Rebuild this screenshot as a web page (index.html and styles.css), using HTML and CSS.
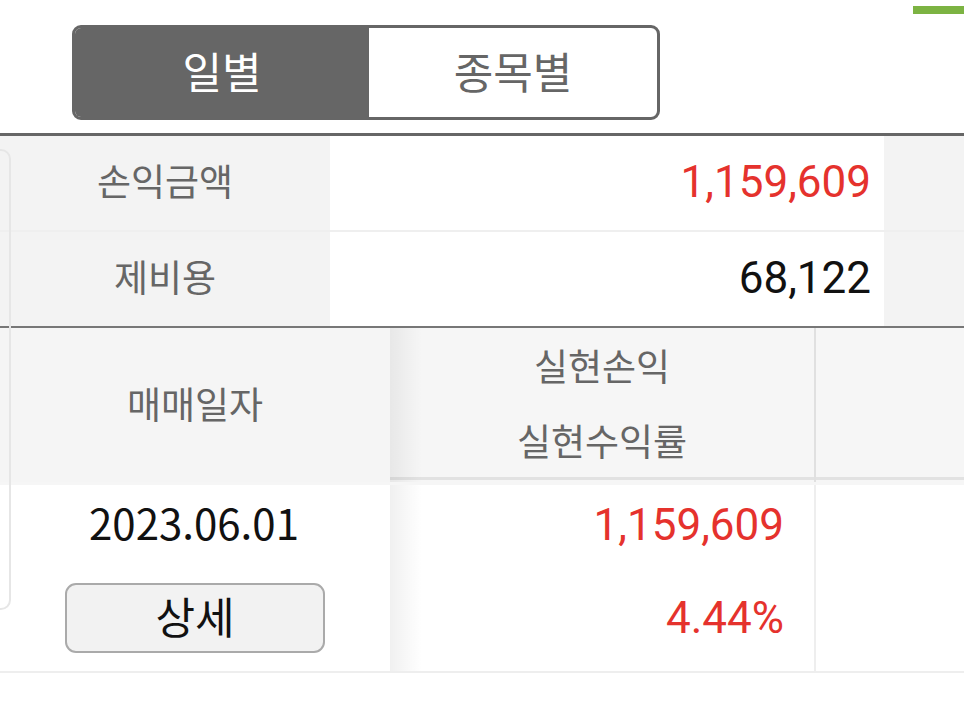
FILE: index.html
```html
<!DOCTYPE html>
<html lang="ko">
<head>
<meta charset="utf-8">
<link rel="stylesheet" href="styles.css">
</head>
<body>
<div class="page">
  <div class="indicator-row"><div class="indicator"></div></div>
  <div class="toggle-wrap">
    <div class="toggle">
      <div class="seg seg-active">일별</div>
      <div class="seg">종목별</div>
    </div>
  </div>
  <div class="rule-dark"></div>
  <div class="content">
    <div class="side-frame"></div>
    <div class="summary">
      <div class="s-label">손익금액</div>
      <div class="s-value red">1,159,609</div>
      <div class="s-pad"></div>
      <div class="s-label s-row2">제비용</div>
      <div class="s-value s-row2 dark">68,122</div>
      <div class="s-pad s-row2"></div>
    </div>
    <div class="rule-mid"></div>
    <div class="table">
      <div class="thead">
        <div class="th th-fixed">매매일자</div>
        <div class="th th-two"><span>실현손익</span><span>실현수익률</span></div>
        <div class="th th-last"></div>
      </div>
      <div class="thead-gap"></div>
      <div class="trow">
        <div class="td td-fixed">
          <div class="date">2023.06.01</div>
          <button class="detail-btn">상세</button>
        </div>
        <div class="td td-two">
          <div class="num-top red">1,159,609</div>
          <div class="num-bot red">4.44%</div>
        </div>
        <div class="td td-last"></div>
      </div>
    </div>
  </div>
</div>
</body>
</html>
```

FILE: styles.css
```css
* { box-sizing: border-box; }
html, body { margin: 0; padding: 0; background: #fff; }
body {
  font-family: "Noto Sans CJK KR", "Noto Sans", sans-serif;
  width: 964px;
  height: 707px;
  overflow: hidden;
}
.page { width: 964px; }

.indicator-row {
  height: 14px;
  padding-top: 6px;
  display: flex;
  justify-content: flex-end;
}
.indicator { width: 51px; height: 8px; background: #7cb342; }

.toggle-wrap { padding: 11px 0 13px 72px; }
.toggle {
  width: 588px;
  height: 95px;
  border: 3px solid #666;
  border-radius: 9px;
  display: flex;
  overflow: hidden;
}
.seg {
  flex: 0 0 288px;
  display: flex;
  align-items: center;
  justify-content: center;
  font-size: 43px;
  color: #666;
  line-height: 1;
  padding-bottom: 4px;
}
.seg-active { flex-basis: 294px; background: #666; color: #fff; }

.rule-dark { height: 3px; background: #666; }

.content { position: relative; }
.side-frame {
  position: absolute;
  left: -20px;
  top: 13px;
  width: 31px;
  height: 461px;
  border: 2px solid #e6e6e6;
  border-radius: 10px;
  pointer-events: none;
  z-index: 3;
}

.summary {
  display: grid;
  grid-template-columns: 330px 554px 80px;
  grid-template-rows: 94px 96px;
}
.s-label {
  background: #f3f3f3;
  color: #666;
  font-size: 37px;
  display: flex;
  align-items: center;
  justify-content: center;
  padding-bottom: 6px;
}
.s-value {
  font-family: Roboto, "Noto Sans", sans-serif;
  font-size: 44px;
  display: flex;
  align-items: center;
  justify-content: flex-end;
  padding-right: 13px;
  padding-bottom: 2px;
}
.s-pad { background: #f3f3f3; }
.s-row2 { border-top: 2px solid #efefef; }
.red { color: #e5322d; }
.dark { color: #111; }

.rule-mid { height: 2px; background: #777; }

.thead {
  display: grid;
  grid-template-columns: 390px 426px 148px;
  height: 152px;
  background: #f6f6f6;
  border-bottom: 3px solid #e2e2e2;
}
.th {
  color: #666;
  font-size: 37px;
  display: flex;
  align-items: center;
  justify-content: center;
}
.th-fixed { background: #f5f5f5; position: relative; z-index: 2; padding-bottom: 4px; }
.th-fixed::after,
.td-fixed::after {
  content: "";
  position: absolute;
  top: 0;
  bottom: 0;
  left: 100%;
  width: 32px;
  background: linear-gradient(to right, rgba(0,0,0,0.06), rgba(0,0,0,0));
  pointer-events: none;
}
.th-two {
  flex-direction: column;
  border-right: 2px solid #e0e0e0;
  padding-bottom: 4px;
}
.th-two span { height: 75px; line-height: 75px; display: block; }
.thead-gap { height: 5px; background: #f6f6f6; }

.trow {
  display: grid;
  grid-template-columns: 390px 426px 148px;
  height: 188px;
  border-bottom: 2px solid #eeeeee;
}
.td-fixed {
  background: #fff;
  display: flex;
  flex-direction: column;
  align-items: center;
  position: relative;
  z-index: 2;
}
.date {
  height: 74px;
  line-height: 74px;
  font-size: 42px;
  color: #111;
  padding-right: 2px;
}
.detail-btn {
  margin-top: 24px;
  width: 260px;
  height: 70px;
  background: #f2f2f2;
  border: 2px solid #aaa;
  border-radius: 11px;
  font-family: "Noto Sans CJK KR", sans-serif;
  font-size: 43px;
  color: #111;
  padding: 0 0 5px 0;
  line-height: 1;
}
.td-two {
  border-right: 2px solid #eeeeee;
  font-family: Roboto, "Noto Sans", sans-serif;
  font-size: 44px;
  text-align: right;
  padding-right: 30px;
}
.num-top { height: 80px; line-height: 80px; }
.num-bot { height: 106px; line-height: 106px; }
```
